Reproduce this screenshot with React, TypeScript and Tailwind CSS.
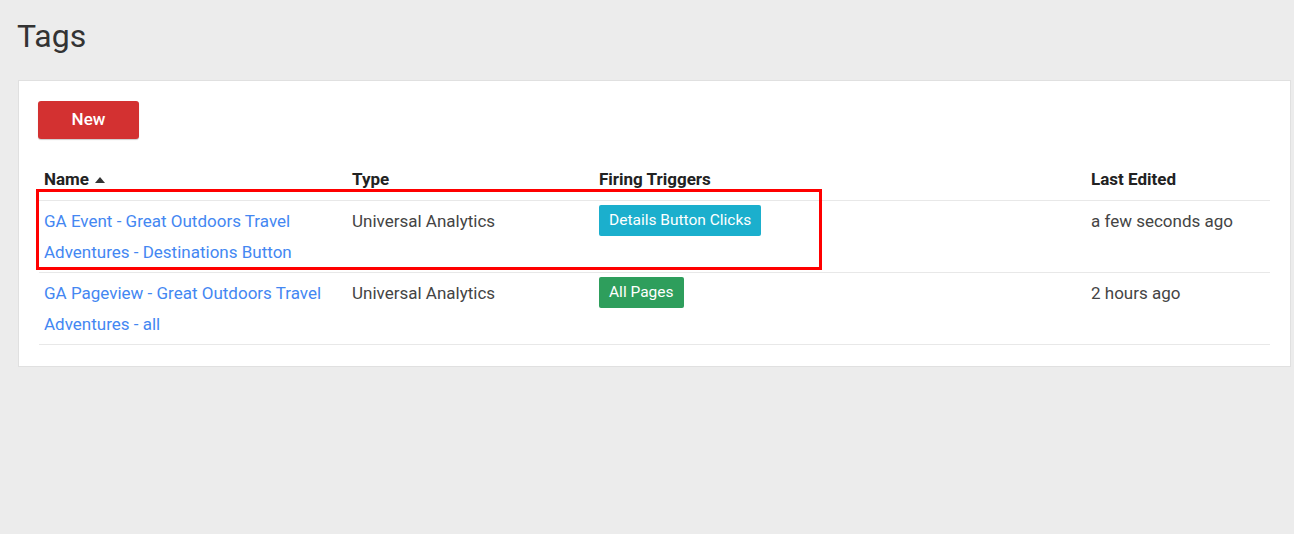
import React from "react";

const rows = [
  {
    name: ["GA Event - Great Outdoors Travel", "Adventures - Destinations Button"],
    type: "Universal Analytics",
    trigger: "Details Button Clicks",
    color: "bg-[#1bafcd]",
    edited: "a few seconds ago",
  },
  {
    name: ["GA Pageview - Great Outdoors Travel", "Adventures - all"],
    type: "Universal Analytics",
    trigger: "All Pages",
    color: "bg-[#2e9e5c]",
    edited: "2 hours ago",
  },
];

export default function App() {
  return (
    <div
      className="min-h-[534px] w-full bg-[#ececec] pl-[17px] pr-[4px] pt-[18px]"
      style={{ fontFamily: "Roboto, 'Noto Sans', sans-serif" }}
    >
      <h1 className="text-[32px] leading-[36px] text-[#333] font-normal">Tags</h1>
      <div className="relative mt-[26px] ml-[1px] w-[1273px] bg-white border border-[#e0e0e0] px-[20px] pt-[20px] pb-[21px]">
        <button className="ml-[-1px] w-[101px] h-[38px] rounded-[3px] bg-[#d33131] text-white text-[17px] font-medium shadow-[0_1px_1px_rgba(0,0,0,0.2)]">
          New
        </button>
        <div className="mt-[25px] grid grid-cols-[308px_247px_492px_1fr] border-b border-[#e8e8e8] pt-[5px] pb-[11px] text-[17px] leading-[20px] font-bold text-[#222]">
          <div className="pl-[5px] flex items-center gap-[6px]">
            Name
            <svg width="10" height="6" viewBox="0 0 10 6" className="mt-[1px]">
              <path d="M0 6 L5 0 L10 6 Z" fill="#333" />
            </svg>
          </div>
          <div className="pl-[5px]">Type</div>
          <div className="pl-[5px]">Firing Triggers</div>
          <div className="pl-[5px]">Last Edited</div>
        </div>
        {rows.map((r, i) => (
          <div
            key={i}
            className="grid grid-cols-[308px_247px_492px_1fr] border-b border-[#e8e8e8] pt-[5px] pb-[4px] text-[17px] leading-[31px]"
          >
            <div className="pl-[5px] text-[#4487f2]">
              {r.name.map((l, j) => (
                <div key={j}>{l}</div>
              ))}
            </div>
            <div className="pl-[5px] text-[#444]">{r.type}</div>
            <div className="pl-[5px] flex items-start">
              <span
                className={`mt-[-1px] block h-[31px] rounded-[2px] px-[10px] text-[15.5px] leading-[31px] text-white ${r.color}`}
              >
                {r.trigger}
              </span>
            </div>
            <div className="pl-[5px] text-[#444]">{r.edited}</div>
          </div>
        ))}
        <div className="pointer-events-none absolute left-[17px] top-[108px] w-[786px] h-[81px] border-[3px] border-[#ff0000]" />
      </div>
    </div>
  );
}
